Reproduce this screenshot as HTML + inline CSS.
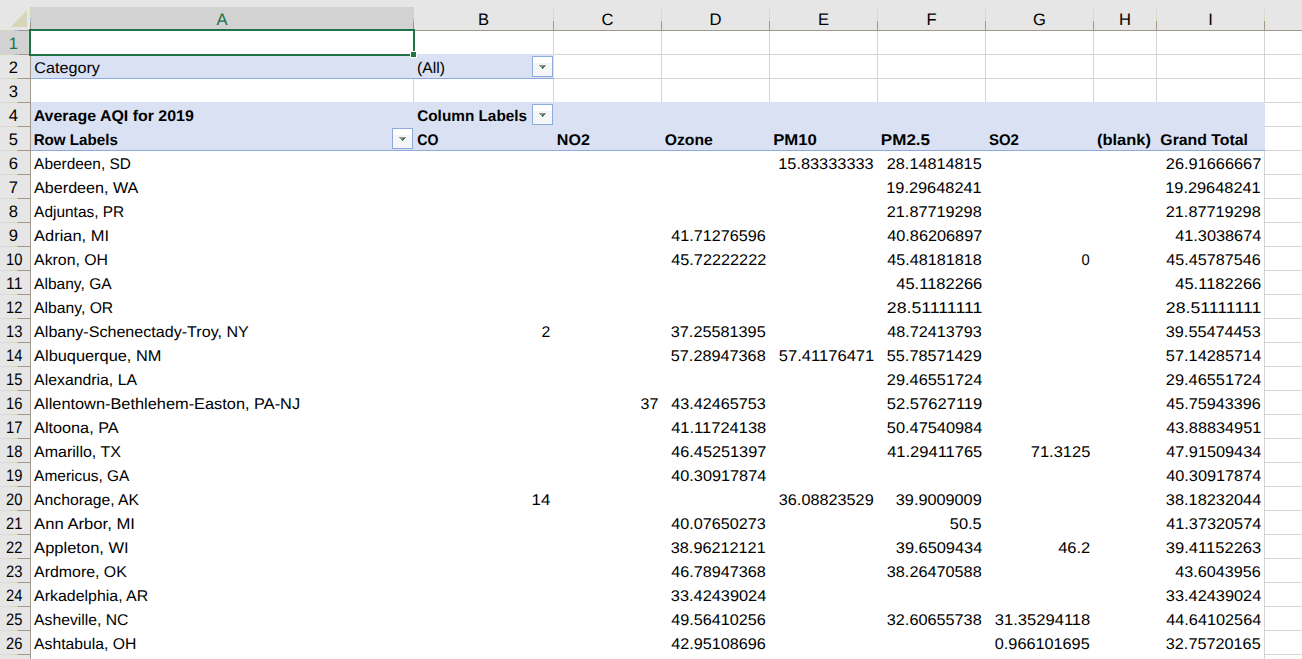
<!DOCTYPE html>
<html><head><meta charset="utf-8"><style>
html,body{margin:0;padding:0;width:1302px;height:659px;overflow:hidden;background:#fff}
svg{display:block;font-family:"Liberation Sans",sans-serif;text-rendering:geometricPrecision}
</style></head><body>
<svg width="1302" height="659" viewBox="0 0 1302 659" shape-rendering="crispEdges">
<rect x="0" y="0" width="1302" height="30" fill="#e6e6e6"/>
<rect x="0" y="30" width="30" height="629" fill="#e6e6e6"/>
<rect x="31" y="7" width="382" height="22" fill="#d2d2d2"/>
<rect x="0" y="31" width="30" height="23" fill="#d2d2d2"/>
<polygon points="27,10.5 27,27 10.5,27" fill="#d6d6b8" shape-rendering="auto"/>
<rect x="413" y="31" width="1" height="628" fill="#d4d4d4"/>
<rect x="553" y="31" width="1" height="628" fill="#d4d4d4"/>
<rect x="661" y="31" width="1" height="628" fill="#d4d4d4"/>
<rect x="769" y="31" width="1" height="628" fill="#d4d4d4"/>
<rect x="877" y="31" width="1" height="628" fill="#d4d4d4"/>
<rect x="985" y="31" width="1" height="628" fill="#d4d4d4"/>
<rect x="1093" y="31" width="1" height="628" fill="#d4d4d4"/>
<rect x="1156" y="31" width="1" height="628" fill="#d4d4d4"/>
<rect x="1264" y="31" width="1" height="628" fill="#d4d4d4"/>
<rect x="1372" y="31" width="1" height="628" fill="#d4d4d4"/>
<rect x="31" y="54" width="1271" height="1" fill="#d4d4d4"/>
<rect x="31" y="78" width="1271" height="1" fill="#d4d4d4"/>
<rect x="31" y="102" width="1271" height="1" fill="#d4d4d4"/>
<rect x="31" y="126" width="1271" height="1" fill="#d4d4d4"/>
<rect x="31" y="150" width="1271" height="1" fill="#d4d4d4"/>
<rect x="31" y="174" width="1271" height="1" fill="#d4d4d4"/>
<rect x="31" y="198" width="1271" height="1" fill="#d4d4d4"/>
<rect x="31" y="222" width="1271" height="1" fill="#d4d4d4"/>
<rect x="31" y="246" width="1271" height="1" fill="#d4d4d4"/>
<rect x="31" y="270" width="1271" height="1" fill="#d4d4d4"/>
<rect x="31" y="294" width="1271" height="1" fill="#d4d4d4"/>
<rect x="31" y="318" width="1271" height="1" fill="#d4d4d4"/>
<rect x="31" y="342" width="1271" height="1" fill="#d4d4d4"/>
<rect x="31" y="366" width="1271" height="1" fill="#d4d4d4"/>
<rect x="31" y="390" width="1271" height="1" fill="#d4d4d4"/>
<rect x="31" y="414" width="1271" height="1" fill="#d4d4d4"/>
<rect x="31" y="438" width="1271" height="1" fill="#d4d4d4"/>
<rect x="31" y="462" width="1271" height="1" fill="#d4d4d4"/>
<rect x="31" y="486" width="1271" height="1" fill="#d4d4d4"/>
<rect x="31" y="510" width="1271" height="1" fill="#d4d4d4"/>
<rect x="31" y="534" width="1271" height="1" fill="#d4d4d4"/>
<rect x="31" y="558" width="1271" height="1" fill="#d4d4d4"/>
<rect x="31" y="582" width="1271" height="1" fill="#d4d4d4"/>
<rect x="31" y="606" width="1271" height="1" fill="#d4d4d4"/>
<rect x="31" y="630" width="1271" height="1" fill="#d4d4d4"/>
<rect x="31" y="654" width="1271" height="1" fill="#d4d4d4"/>
<rect x="31" y="678" width="1271" height="1" fill="#d4d4d4"/>
<rect x="31" y="151" width="1233" height="508" fill="#ffffff"/>
<rect x="31" y="54" width="523" height="24" fill="#d9e1f2"/>
<rect x="31" y="78" width="523" height="1" fill="#8ea9db"/>
<rect x="31" y="102" width="1234" height="48" fill="#d9e1f2"/>
<rect x="31" y="150" width="1234" height="1" fill="#8ea9db"/>
<rect x="413" y="7" width="1" height="11" fill="#d6d6b4"/>
<rect x="413" y="18" width="1" height="4" fill="#a9b9d9"/>
<rect x="413" y="22" width="1" height="8" fill="#a0978d"/>
<rect x="553" y="7" width="1" height="8" fill="#d9d9d9"/>
<rect x="553" y="15" width="1" height="6" fill="#dcdcb4"/>
<rect x="553" y="21" width="1" height="9" fill="#a0978d"/>
<rect x="661" y="7" width="1" height="8" fill="#d9d9d9"/>
<rect x="661" y="15" width="1" height="6" fill="#dcdcb4"/>
<rect x="661" y="21" width="1" height="9" fill="#a0978d"/>
<rect x="769" y="7" width="1" height="8" fill="#d9d9d9"/>
<rect x="769" y="15" width="1" height="6" fill="#dcdcb4"/>
<rect x="769" y="21" width="1" height="9" fill="#a0978d"/>
<rect x="877" y="7" width="1" height="8" fill="#d9d9d9"/>
<rect x="877" y="15" width="1" height="6" fill="#dcdcb4"/>
<rect x="877" y="21" width="1" height="9" fill="#a0978d"/>
<rect x="985" y="7" width="1" height="8" fill="#d9d9d9"/>
<rect x="985" y="15" width="1" height="6" fill="#dcdcb4"/>
<rect x="985" y="21" width="1" height="9" fill="#a0978d"/>
<rect x="1093" y="7" width="1" height="8" fill="#d9d9d9"/>
<rect x="1093" y="15" width="1" height="6" fill="#dcdcb4"/>
<rect x="1093" y="21" width="1" height="9" fill="#a0978d"/>
<rect x="1156" y="7" width="1" height="8" fill="#d9d9d9"/>
<rect x="1156" y="15" width="1" height="6" fill="#dcdcb4"/>
<rect x="1156" y="21" width="1" height="9" fill="#a0978d"/>
<rect x="1264" y="7" width="1" height="8" fill="#d9d9d9"/>
<rect x="1264" y="15" width="1" height="6" fill="#dcdcb4"/>
<rect x="1264" y="21" width="1" height="9" fill="#a0978d"/>
<rect x="1372" y="7" width="1" height="8" fill="#d9d9d9"/>
<rect x="1372" y="15" width="1" height="6" fill="#dcdcb4"/>
<rect x="1372" y="21" width="1" height="9" fill="#a0978d"/>
<rect x="0" y="30" width="1302" height="1" fill="#a0978d"/>
<rect x="30" y="7" width="1" height="11" fill="#d6d6b4"/>
<rect x="30" y="18" width="1" height="4" fill="#a9b9d9"/>
<rect x="30" y="22" width="1" height="637" fill="#a0978d"/>
<rect x="0" y="30" width="14" height="1" fill="#d6d6b4"/>
<rect x="14" y="30" width="5" height="1" fill="#a9b9d9"/>
<rect x="19" y="30" width="11" height="1" fill="#a0978d"/>
<rect x="0" y="54" width="14" height="1" fill="#d6d6b4"/>
<rect x="14" y="54" width="5" height="1" fill="#a9b9d9"/>
<rect x="19" y="54" width="11" height="1" fill="#a0978d"/>
<rect x="0" y="78" width="9" height="1" fill="#d9d9d9"/>
<rect x="9" y="78" width="8" height="1" fill="#dcdcb4"/>
<rect x="17" y="78" width="1" height="1" fill="#a9b9d9"/>
<rect x="18" y="78" width="12" height="1" fill="#a0978d"/>
<rect x="0" y="102" width="9" height="1" fill="#d9d9d9"/>
<rect x="9" y="102" width="8" height="1" fill="#dcdcb4"/>
<rect x="17" y="102" width="1" height="1" fill="#a9b9d9"/>
<rect x="18" y="102" width="12" height="1" fill="#a0978d"/>
<rect x="0" y="126" width="9" height="1" fill="#d9d9d9"/>
<rect x="9" y="126" width="8" height="1" fill="#dcdcb4"/>
<rect x="17" y="126" width="1" height="1" fill="#a9b9d9"/>
<rect x="18" y="126" width="12" height="1" fill="#a0978d"/>
<rect x="0" y="150" width="9" height="1" fill="#d9d9d9"/>
<rect x="9" y="150" width="8" height="1" fill="#dcdcb4"/>
<rect x="17" y="150" width="1" height="1" fill="#a9b9d9"/>
<rect x="18" y="150" width="12" height="1" fill="#a0978d"/>
<rect x="0" y="174" width="9" height="1" fill="#d9d9d9"/>
<rect x="9" y="174" width="8" height="1" fill="#dcdcb4"/>
<rect x="17" y="174" width="1" height="1" fill="#a9b9d9"/>
<rect x="18" y="174" width="12" height="1" fill="#a0978d"/>
<rect x="0" y="198" width="9" height="1" fill="#d9d9d9"/>
<rect x="9" y="198" width="8" height="1" fill="#dcdcb4"/>
<rect x="17" y="198" width="1" height="1" fill="#a9b9d9"/>
<rect x="18" y="198" width="12" height="1" fill="#a0978d"/>
<rect x="0" y="222" width="9" height="1" fill="#d9d9d9"/>
<rect x="9" y="222" width="8" height="1" fill="#dcdcb4"/>
<rect x="17" y="222" width="1" height="1" fill="#a9b9d9"/>
<rect x="18" y="222" width="12" height="1" fill="#a0978d"/>
<rect x="0" y="246" width="9" height="1" fill="#d9d9d9"/>
<rect x="9" y="246" width="8" height="1" fill="#dcdcb4"/>
<rect x="17" y="246" width="1" height="1" fill="#a9b9d9"/>
<rect x="18" y="246" width="12" height="1" fill="#a0978d"/>
<rect x="0" y="270" width="9" height="1" fill="#d9d9d9"/>
<rect x="9" y="270" width="8" height="1" fill="#dcdcb4"/>
<rect x="17" y="270" width="1" height="1" fill="#a9b9d9"/>
<rect x="18" y="270" width="12" height="1" fill="#a0978d"/>
<rect x="0" y="294" width="9" height="1" fill="#d9d9d9"/>
<rect x="9" y="294" width="8" height="1" fill="#dcdcb4"/>
<rect x="17" y="294" width="1" height="1" fill="#a9b9d9"/>
<rect x="18" y="294" width="12" height="1" fill="#a0978d"/>
<rect x="0" y="318" width="9" height="1" fill="#d9d9d9"/>
<rect x="9" y="318" width="8" height="1" fill="#dcdcb4"/>
<rect x="17" y="318" width="1" height="1" fill="#a9b9d9"/>
<rect x="18" y="318" width="12" height="1" fill="#a0978d"/>
<rect x="0" y="342" width="9" height="1" fill="#d9d9d9"/>
<rect x="9" y="342" width="8" height="1" fill="#dcdcb4"/>
<rect x="17" y="342" width="1" height="1" fill="#a9b9d9"/>
<rect x="18" y="342" width="12" height="1" fill="#a0978d"/>
<rect x="0" y="366" width="9" height="1" fill="#d9d9d9"/>
<rect x="9" y="366" width="8" height="1" fill="#dcdcb4"/>
<rect x="17" y="366" width="1" height="1" fill="#a9b9d9"/>
<rect x="18" y="366" width="12" height="1" fill="#a0978d"/>
<rect x="0" y="390" width="9" height="1" fill="#d9d9d9"/>
<rect x="9" y="390" width="8" height="1" fill="#dcdcb4"/>
<rect x="17" y="390" width="1" height="1" fill="#a9b9d9"/>
<rect x="18" y="390" width="12" height="1" fill="#a0978d"/>
<rect x="0" y="414" width="9" height="1" fill="#d9d9d9"/>
<rect x="9" y="414" width="8" height="1" fill="#dcdcb4"/>
<rect x="17" y="414" width="1" height="1" fill="#a9b9d9"/>
<rect x="18" y="414" width="12" height="1" fill="#a0978d"/>
<rect x="0" y="438" width="9" height="1" fill="#d9d9d9"/>
<rect x="9" y="438" width="8" height="1" fill="#dcdcb4"/>
<rect x="17" y="438" width="1" height="1" fill="#a9b9d9"/>
<rect x="18" y="438" width="12" height="1" fill="#a0978d"/>
<rect x="0" y="462" width="9" height="1" fill="#d9d9d9"/>
<rect x="9" y="462" width="8" height="1" fill="#dcdcb4"/>
<rect x="17" y="462" width="1" height="1" fill="#a9b9d9"/>
<rect x="18" y="462" width="12" height="1" fill="#a0978d"/>
<rect x="0" y="486" width="9" height="1" fill="#d9d9d9"/>
<rect x="9" y="486" width="8" height="1" fill="#dcdcb4"/>
<rect x="17" y="486" width="1" height="1" fill="#a9b9d9"/>
<rect x="18" y="486" width="12" height="1" fill="#a0978d"/>
<rect x="0" y="510" width="9" height="1" fill="#d9d9d9"/>
<rect x="9" y="510" width="8" height="1" fill="#dcdcb4"/>
<rect x="17" y="510" width="1" height="1" fill="#a9b9d9"/>
<rect x="18" y="510" width="12" height="1" fill="#a0978d"/>
<rect x="0" y="534" width="9" height="1" fill="#d9d9d9"/>
<rect x="9" y="534" width="8" height="1" fill="#dcdcb4"/>
<rect x="17" y="534" width="1" height="1" fill="#a9b9d9"/>
<rect x="18" y="534" width="12" height="1" fill="#a0978d"/>
<rect x="0" y="558" width="9" height="1" fill="#d9d9d9"/>
<rect x="9" y="558" width="8" height="1" fill="#dcdcb4"/>
<rect x="17" y="558" width="1" height="1" fill="#a9b9d9"/>
<rect x="18" y="558" width="12" height="1" fill="#a0978d"/>
<rect x="0" y="582" width="9" height="1" fill="#d9d9d9"/>
<rect x="9" y="582" width="8" height="1" fill="#dcdcb4"/>
<rect x="17" y="582" width="1" height="1" fill="#a9b9d9"/>
<rect x="18" y="582" width="12" height="1" fill="#a0978d"/>
<rect x="0" y="606" width="9" height="1" fill="#d9d9d9"/>
<rect x="9" y="606" width="8" height="1" fill="#dcdcb4"/>
<rect x="17" y="606" width="1" height="1" fill="#a9b9d9"/>
<rect x="18" y="606" width="12" height="1" fill="#a0978d"/>
<rect x="0" y="630" width="9" height="1" fill="#d9d9d9"/>
<rect x="9" y="630" width="8" height="1" fill="#dcdcb4"/>
<rect x="17" y="630" width="1" height="1" fill="#a9b9d9"/>
<rect x="18" y="630" width="12" height="1" fill="#a0978d"/>
<rect x="0" y="654" width="9" height="1" fill="#d9d9d9"/>
<rect x="9" y="654" width="8" height="1" fill="#dcdcb4"/>
<rect x="17" y="654" width="1" height="1" fill="#a9b9d9"/>
<rect x="18" y="654" width="12" height="1" fill="#a0978d"/>
<rect x="29" y="29" width="386" height="2" fill="#217346"/>
<rect x="29" y="29" width="2" height="27" fill="#217346"/>
<rect x="413" y="29" width="2" height="22" fill="#217346"/>
<rect x="29" y="54" width="381" height="2" fill="#217346"/>
<rect x="410" y="51" width="7" height="7" fill="#ffffff"/>
<rect x="411" y="52" width="5" height="5" fill="#217346"/>
<rect x="532" y="56" width="21" height="21" fill="#8ea9db"/>
<rect x="533" y="57" width="19" height="19" fill="#ffffff"/>
<rect x="533" y="63" width="19" height="13" fill="#f5f6f7"/>
<rect x="539" y="65" width="7" height="1" fill="#9a9088"/>
<rect x="540" y="66" width="3" height="1" fill="#9a9088"/>
<rect x="543" y="66" width="2" height="1" fill="#1f7a4a"/>
<rect x="541" y="67" width="1" height="1" fill="#9a9088"/>
<rect x="542" y="67" width="2" height="1" fill="#1f7a4a"/>
<rect x="542" y="68" width="1" height="1" fill="#1f7a4a"/>
<rect x="532" y="104" width="21" height="21" fill="#8ea9db"/>
<rect x="533" y="105" width="19" height="19" fill="#ffffff"/>
<rect x="533" y="111" width="19" height="13" fill="#f5f6f7"/>
<rect x="539" y="113" width="7" height="1" fill="#9a9088"/>
<rect x="540" y="114" width="3" height="1" fill="#9a9088"/>
<rect x="543" y="114" width="2" height="1" fill="#1f7a4a"/>
<rect x="541" y="115" width="1" height="1" fill="#9a9088"/>
<rect x="542" y="115" width="2" height="1" fill="#1f7a4a"/>
<rect x="542" y="116" width="1" height="1" fill="#1f7a4a"/>
<rect x="392" y="128" width="21" height="21" fill="#8ea9db"/>
<rect x="393" y="129" width="19" height="19" fill="#ffffff"/>
<rect x="393" y="135" width="19" height="13" fill="#f5f6f7"/>
<rect x="399" y="137" width="7" height="1" fill="#9a9088"/>
<rect x="400" y="138" width="3" height="1" fill="#9a9088"/>
<rect x="403" y="138" width="2" height="1" fill="#1f7a4a"/>
<rect x="401" y="139" width="1" height="1" fill="#9a9088"/>
<rect x="402" y="139" width="2" height="1" fill="#1f7a4a"/>
<rect x="402" y="140" width="1" height="1" fill="#1f7a4a"/>
<text x="222.0" y="25" font-size="16.6" text-anchor="middle" fill="#217346">A</text>
<text x="483.5" y="25" font-size="16.6" text-anchor="middle">B</text>
<text x="607.5" y="25" font-size="16.6" text-anchor="middle">C</text>
<text x="715.5" y="25" font-size="16.6" text-anchor="middle">D</text>
<text x="823.5" y="25" font-size="16.6" text-anchor="middle">E</text>
<text x="931.5" y="25" font-size="16.6" text-anchor="middle">F</text>
<text x="1039.5" y="25" font-size="16.6" text-anchor="middle">G</text>
<text x="1125.0" y="25" font-size="16.6" text-anchor="middle">H</text>
<text x="1210.5" y="25" font-size="16.6" text-anchor="middle">I</text>
<text x="13.4" y="49" font-size="16.6" text-anchor="middle" fill="#217346">1</text>
<text x="13.4" y="73" font-size="16.6" text-anchor="middle">2</text>
<text x="13.4" y="97" font-size="16.6" text-anchor="middle">3</text>
<text x="13.4" y="121" font-size="16.6" text-anchor="middle">4</text>
<text x="13.4" y="145" font-size="16.6" text-anchor="middle">5</text>
<text x="13.4" y="169" font-size="16.6" text-anchor="middle">6</text>
<text x="13.4" y="193" font-size="16.6" text-anchor="middle">7</text>
<text x="13.4" y="217" font-size="16.6" text-anchor="middle">8</text>
<text x="13.4" y="241" font-size="16.6" text-anchor="middle">9</text>
<text x="14.3" y="265" font-size="16.6" text-anchor="middle" textLength="16.4" lengthAdjust="spacingAndGlyphs">10</text>
<text x="14.3" y="289" font-size="16.6" text-anchor="middle" textLength="16.4" lengthAdjust="spacingAndGlyphs">11</text>
<text x="14.3" y="313" font-size="16.6" text-anchor="middle" textLength="16.4" lengthAdjust="spacingAndGlyphs">12</text>
<text x="14.3" y="337" font-size="16.6" text-anchor="middle" textLength="16.4" lengthAdjust="spacingAndGlyphs">13</text>
<text x="14.3" y="361" font-size="16.6" text-anchor="middle" textLength="16.4" lengthAdjust="spacingAndGlyphs">14</text>
<text x="14.3" y="385" font-size="16.6" text-anchor="middle" textLength="16.4" lengthAdjust="spacingAndGlyphs">15</text>
<text x="14.3" y="409" font-size="16.6" text-anchor="middle" textLength="16.4" lengthAdjust="spacingAndGlyphs">16</text>
<text x="14.3" y="433" font-size="16.6" text-anchor="middle" textLength="16.4" lengthAdjust="spacingAndGlyphs">17</text>
<text x="14.3" y="457" font-size="16.6" text-anchor="middle" textLength="16.4" lengthAdjust="spacingAndGlyphs">18</text>
<text x="14.3" y="481" font-size="16.6" text-anchor="middle" textLength="16.4" lengthAdjust="spacingAndGlyphs">19</text>
<text x="14.3" y="505" font-size="16.6" text-anchor="middle" textLength="16.4" lengthAdjust="spacingAndGlyphs">20</text>
<text x="14.3" y="529" font-size="16.6" text-anchor="middle" textLength="16.4" lengthAdjust="spacingAndGlyphs">21</text>
<text x="14.3" y="553" font-size="16.6" text-anchor="middle" textLength="16.4" lengthAdjust="spacingAndGlyphs">22</text>
<text x="14.3" y="577" font-size="16.6" text-anchor="middle" textLength="16.4" lengthAdjust="spacingAndGlyphs">23</text>
<text x="14.3" y="601" font-size="16.6" text-anchor="middle" textLength="16.4" lengthAdjust="spacingAndGlyphs">24</text>
<text x="14.3" y="625" font-size="16.6" text-anchor="middle" textLength="16.4" lengthAdjust="spacingAndGlyphs">25</text>
<text x="14.3" y="649" font-size="16.6" text-anchor="middle" textLength="16.4" lengthAdjust="spacingAndGlyphs">26</text>
<text x="14.3" y="673" font-size="16.6" text-anchor="middle" textLength="16.4" lengthAdjust="spacingAndGlyphs">27</text>
<text x="34.24" y="73" font-size="15.5" textLength="65.7" lengthAdjust="spacingAndGlyphs">Category</text>
<text x="417.12" y="73" font-size="15.5" textLength="27.9" lengthAdjust="spacingAndGlyphs">(All)</text>
<text x="33.68" y="121" font-size="15.5" font-weight="bold" textLength="160.2" lengthAdjust="spacingAndGlyphs">Average AQI for 2019</text>
<text x="417.2" y="121" font-size="15.5" font-weight="bold" textLength="109.9" lengthAdjust="spacingAndGlyphs">Column Labels</text>
<text x="33.68" y="145" font-size="15.5" font-weight="bold" textLength="84.2" lengthAdjust="spacingAndGlyphs">Row Labels</text>
<text x="417.2" y="145" font-size="15.5" font-weight="bold" textLength="21.2" lengthAdjust="spacingAndGlyphs">CO</text>
<text x="556.88" y="145" font-size="15.5" font-weight="bold" textLength="33.0" lengthAdjust="spacingAndGlyphs">NO2</text>
<text x="664.68" y="145" font-size="15.5" font-weight="bold" textLength="48.1" lengthAdjust="spacingAndGlyphs">Ozone</text>
<text x="773.16" y="145" font-size="15.5" font-weight="bold" textLength="43.7" lengthAdjust="spacingAndGlyphs">PM10</text>
<text x="880.88" y="145" font-size="15.5" font-weight="bold" textLength="49.2" lengthAdjust="spacingAndGlyphs">PM2.5</text>
<text x="988.96" y="145" font-size="15.5" font-weight="bold" textLength="30.0" lengthAdjust="spacingAndGlyphs">SO2</text>
<text x="1096.96" y="145" font-size="15.5" font-weight="bold" textLength="54.0" lengthAdjust="spacingAndGlyphs">(blank)</text>
<text x="1160.32" y="145" font-size="15.5" font-weight="bold" textLength="87.7" lengthAdjust="spacingAndGlyphs">Grand Total</text>
<text x="34.12" y="169" font-size="15.5" textLength="96.8" lengthAdjust="spacingAndGlyphs">Aberdeen, SD</text>
<text x="873.7" y="169" font-size="15.5" text-anchor="end" textLength="95.5" lengthAdjust="spacingAndGlyphs">15.83333333</text>
<text x="981.7" y="169" font-size="15.5" text-anchor="end" textLength="94.9" lengthAdjust="spacingAndGlyphs">28.14814815</text>
<text x="1261.3" y="169" font-size="15.5" text-anchor="end" textLength="95.5" lengthAdjust="spacingAndGlyphs">26.91666667</text>
<text x="34.12" y="193" font-size="15.5" textLength="104.2" lengthAdjust="spacingAndGlyphs">Aberdeen, WA</text>
<text x="981.7" y="193" font-size="15.5" text-anchor="end" textLength="95.5" lengthAdjust="spacingAndGlyphs">19.29648241</text>
<text x="1260.7" y="193" font-size="15.5" text-anchor="end" textLength="95.5" lengthAdjust="spacingAndGlyphs">19.29648241</text>
<text x="34.12" y="217" font-size="15.5" textLength="90.1" lengthAdjust="spacingAndGlyphs">Adjuntas, PR</text>
<text x="981.7" y="217" font-size="15.5" text-anchor="end" textLength="94.9" lengthAdjust="spacingAndGlyphs">21.87719298</text>
<text x="1260.7" y="217" font-size="15.5" text-anchor="end" textLength="94.9" lengthAdjust="spacingAndGlyphs">21.87719298</text>
<text x="34.12" y="241" font-size="15.5" textLength="74.9" lengthAdjust="spacingAndGlyphs">Adrian, MI</text>
<text x="765.7" y="241" font-size="15.5" text-anchor="end" textLength="94.5" lengthAdjust="spacingAndGlyphs">41.71276596</text>
<text x="982.3" y="241" font-size="15.5" text-anchor="end" textLength="95.1" lengthAdjust="spacingAndGlyphs">40.86206897</text>
<text x="1261.3" y="241" font-size="15.5" text-anchor="end" textLength="86.1" lengthAdjust="spacingAndGlyphs">41.3038674</text>
<text x="34.12" y="265" font-size="15.5" textLength="73.9" lengthAdjust="spacingAndGlyphs">Akron, OH</text>
<text x="766.3" y="265" font-size="15.5" text-anchor="end" textLength="95.1" lengthAdjust="spacingAndGlyphs">45.72222222</text>
<text x="981.7" y="265" font-size="15.5" text-anchor="end" textLength="94.5" lengthAdjust="spacingAndGlyphs">45.48181818</text>
<text x="1089.7" y="265" font-size="15.5" text-anchor="end" textLength="8.2" lengthAdjust="spacingAndGlyphs">0</text>
<text x="1260.7" y="265" font-size="15.5" text-anchor="end" textLength="94.5" lengthAdjust="spacingAndGlyphs">45.45787546</text>
<text x="34.12" y="289" font-size="15.5" textLength="77.5" lengthAdjust="spacingAndGlyphs">Albany, GA</text>
<text x="982.3" y="289" font-size="15.5" text-anchor="end" textLength="86.1" lengthAdjust="spacingAndGlyphs">45.1182266</text>
<text x="1261.3" y="289" font-size="15.5" text-anchor="end" textLength="86.1" lengthAdjust="spacingAndGlyphs">45.1182266</text>
<text x="34.12" y="313" font-size="15.5" textLength="79.1" lengthAdjust="spacingAndGlyphs">Albany, OR</text>
<text x="982.3" y="313" font-size="15.5" text-anchor="end" textLength="95.5" lengthAdjust="spacingAndGlyphs">28.51111111</text>
<text x="1261.3" y="313" font-size="15.5" text-anchor="end" textLength="95.5" lengthAdjust="spacingAndGlyphs">28.51111111</text>
<text x="34.12" y="337" font-size="15.5" textLength="214.7" lengthAdjust="spacingAndGlyphs">Albany-Schenectady-Troy, NY</text>
<text x="550.3" y="337" font-size="15.5" text-anchor="end" textLength="8.8" lengthAdjust="spacingAndGlyphs">2</text>
<text x="765.7" y="337" font-size="15.5" text-anchor="end" textLength="94.9" lengthAdjust="spacingAndGlyphs">37.25581395</text>
<text x="981.7" y="337" font-size="15.5" text-anchor="end" textLength="94.5" lengthAdjust="spacingAndGlyphs">48.72413793</text>
<text x="1260.7" y="337" font-size="15.5" text-anchor="end" textLength="94.9" lengthAdjust="spacingAndGlyphs">39.55474453</text>
<text x="34.12" y="361" font-size="15.5" textLength="127.2" lengthAdjust="spacingAndGlyphs">Albuquerque, NM</text>
<text x="765.7" y="361" font-size="15.5" text-anchor="end" textLength="94.9" lengthAdjust="spacingAndGlyphs">57.28947368</text>
<text x="874.3" y="361" font-size="15.5" text-anchor="end" textLength="95.5" lengthAdjust="spacingAndGlyphs">57.41176471</text>
<text x="981.7" y="361" font-size="15.5" text-anchor="end" textLength="94.9" lengthAdjust="spacingAndGlyphs">55.78571429</text>
<text x="1261.3" y="361" font-size="15.5" text-anchor="end" textLength="95.5" lengthAdjust="spacingAndGlyphs">57.14285714</text>
<text x="34.12" y="385" font-size="15.5" textLength="102.9" lengthAdjust="spacingAndGlyphs">Alexandria, LA</text>
<text x="982.3" y="385" font-size="15.5" text-anchor="end" textLength="95.5" lengthAdjust="spacingAndGlyphs">29.46551724</text>
<text x="1261.3" y="385" font-size="15.5" text-anchor="end" textLength="95.5" lengthAdjust="spacingAndGlyphs">29.46551724</text>
<text x="34.12" y="409" font-size="15.5" textLength="266.0" lengthAdjust="spacingAndGlyphs">Allentown-Bethlehem-Easton, PA-NJ</text>
<text x="658.3" y="409" font-size="15.5" text-anchor="end" textLength="17.8" lengthAdjust="spacingAndGlyphs">37</text>
<text x="765.7" y="409" font-size="15.5" text-anchor="end" textLength="94.5" lengthAdjust="spacingAndGlyphs">43.42465753</text>
<text x="982.3" y="409" font-size="15.5" text-anchor="end" textLength="95.5" lengthAdjust="spacingAndGlyphs">52.57627119</text>
<text x="1260.7" y="409" font-size="15.5" text-anchor="end" textLength="94.5" lengthAdjust="spacingAndGlyphs">45.75943396</text>
<text x="34.12" y="433" font-size="15.5" textLength="84.5" lengthAdjust="spacingAndGlyphs">Altoona, PA</text>
<text x="766.3" y="433" font-size="15.5" text-anchor="end" textLength="95.1" lengthAdjust="spacingAndGlyphs">41.11724138</text>
<text x="982.3" y="433" font-size="15.5" text-anchor="end" textLength="95.5" lengthAdjust="spacingAndGlyphs">50.47540984</text>
<text x="1261.3" y="433" font-size="15.5" text-anchor="end" textLength="95.1" lengthAdjust="spacingAndGlyphs">43.88834951</text>
<text x="34.12" y="457" font-size="15.5" textLength="86.8" lengthAdjust="spacingAndGlyphs">Amarillo, TX</text>
<text x="766.3" y="457" font-size="15.5" text-anchor="end" textLength="95.1" lengthAdjust="spacingAndGlyphs">46.45251397</text>
<text x="982.3" y="457" font-size="15.5" text-anchor="end" textLength="95.1" lengthAdjust="spacingAndGlyphs">41.29411765</text>
<text x="1090.3" y="457" font-size="15.5" text-anchor="end" textLength="59.5" lengthAdjust="spacingAndGlyphs">71.3125</text>
<text x="1261.3" y="457" font-size="15.5" text-anchor="end" textLength="95.1" lengthAdjust="spacingAndGlyphs">47.91509434</text>
<text x="34.12" y="481" font-size="15.5" textLength="95.3" lengthAdjust="spacingAndGlyphs">Americus, GA</text>
<text x="766.3" y="481" font-size="15.5" text-anchor="end" textLength="95.1" lengthAdjust="spacingAndGlyphs">40.30917874</text>
<text x="1261.3" y="481" font-size="15.5" text-anchor="end" textLength="95.1" lengthAdjust="spacingAndGlyphs">40.30917874</text>
<text x="34.12" y="505" font-size="15.5" textLength="104.9" lengthAdjust="spacingAndGlyphs">Anchorage, AK</text>
<text x="550.3" y="505" font-size="15.5" text-anchor="end" textLength="18.8" lengthAdjust="spacingAndGlyphs">14</text>
<text x="873.7" y="505" font-size="15.5" text-anchor="end" textLength="94.9" lengthAdjust="spacingAndGlyphs">36.08823529</text>
<text x="981.7" y="505" font-size="15.5" text-anchor="end" textLength="85.9" lengthAdjust="spacingAndGlyphs">39.9009009</text>
<text x="1261.3" y="505" font-size="15.5" text-anchor="end" textLength="95.5" lengthAdjust="spacingAndGlyphs">38.18232044</text>
<text x="34.12" y="529" font-size="15.5" textLength="100.9" lengthAdjust="spacingAndGlyphs">Ann Arbor, MI</text>
<text x="765.7" y="529" font-size="15.5" text-anchor="end" textLength="94.5" lengthAdjust="spacingAndGlyphs">40.07650273</text>
<text x="981.7" y="529" font-size="15.5" text-anchor="end" textLength="31.9" lengthAdjust="spacingAndGlyphs">50.5</text>
<text x="1261.3" y="529" font-size="15.5" text-anchor="end" textLength="95.1" lengthAdjust="spacingAndGlyphs">41.37320574</text>
<text x="34.12" y="553" font-size="15.5" textLength="94.6" lengthAdjust="spacingAndGlyphs">Appleton, WI</text>
<text x="765.7" y="553" font-size="15.5" text-anchor="end" textLength="94.9" lengthAdjust="spacingAndGlyphs">38.96212121</text>
<text x="982.3" y="553" font-size="15.5" text-anchor="end" textLength="86.5" lengthAdjust="spacingAndGlyphs">39.6509434</text>
<text x="1090.3" y="553" font-size="15.5" text-anchor="end" textLength="32.1" lengthAdjust="spacingAndGlyphs">46.2</text>
<text x="1261.3" y="553" font-size="15.5" text-anchor="end" textLength="95.5" lengthAdjust="spacingAndGlyphs">39.41152263</text>
<text x="34.12" y="577" font-size="15.5" textLength="92.7" lengthAdjust="spacingAndGlyphs">Ardmore, OK</text>
<text x="765.7" y="577" font-size="15.5" text-anchor="end" textLength="94.5" lengthAdjust="spacingAndGlyphs">46.78947368</text>
<text x="981.7" y="577" font-size="15.5" text-anchor="end" textLength="94.9" lengthAdjust="spacingAndGlyphs">38.26470588</text>
<text x="1260.7" y="577" font-size="15.5" text-anchor="end" textLength="85.5" lengthAdjust="spacingAndGlyphs">43.6043956</text>
<text x="34.12" y="601" font-size="15.5" textLength="114.1" lengthAdjust="spacingAndGlyphs">Arkadelphia, AR</text>
<text x="766.3" y="601" font-size="15.5" text-anchor="end" textLength="95.5" lengthAdjust="spacingAndGlyphs">33.42439024</text>
<text x="1261.3" y="601" font-size="15.5" text-anchor="end" textLength="95.5" lengthAdjust="spacingAndGlyphs">33.42439024</text>
<text x="34.12" y="625" font-size="15.5" textLength="94.2" lengthAdjust="spacingAndGlyphs">Asheville, NC</text>
<text x="765.7" y="625" font-size="15.5" text-anchor="end" textLength="94.5" lengthAdjust="spacingAndGlyphs">49.56410256</text>
<text x="981.7" y="625" font-size="15.5" text-anchor="end" textLength="94.9" lengthAdjust="spacingAndGlyphs">32.60655738</text>
<text x="1090.3" y="625" font-size="15.5" text-anchor="end" textLength="95.5" lengthAdjust="spacingAndGlyphs">31.35294118</text>
<text x="1261.3" y="625" font-size="15.5" text-anchor="end" textLength="95.1" lengthAdjust="spacingAndGlyphs">44.64102564</text>
<text x="34.12" y="649" font-size="15.5" textLength="102.2" lengthAdjust="spacingAndGlyphs">Ashtabula, OH</text>
<text x="765.7" y="649" font-size="15.5" text-anchor="end" textLength="94.5" lengthAdjust="spacingAndGlyphs">42.95108696</text>
<text x="1089.7" y="649" font-size="15.5" text-anchor="end" textLength="94.9" lengthAdjust="spacingAndGlyphs">0.966101695</text>
<text x="1260.7" y="649" font-size="15.5" text-anchor="end" textLength="94.9" lengthAdjust="spacingAndGlyphs">32.75720165</text>
</svg>
</body></html>
